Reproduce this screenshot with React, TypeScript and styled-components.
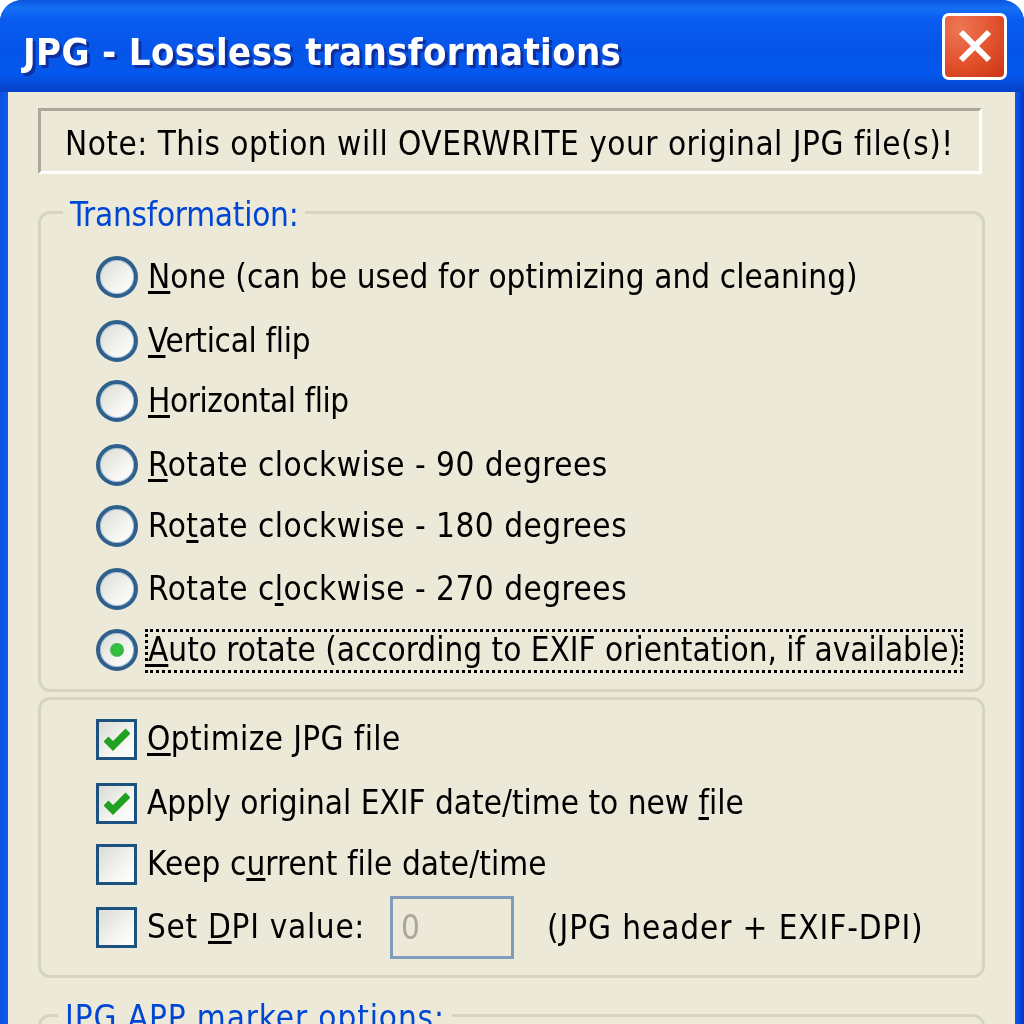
import styled, { createGlobalStyle } from 'styled-components'

const GlobalStyle = createGlobalStyle`
    html, body {
        margin: 0;
        padding: 0;
        background: #ffffff;
    }
    body {
        font-family: 'DejaVu Sans Condensed', 'DejaVu Sans', sans-serif;
        font-variant-ligatures: none;
    }
`

const Screen = styled.div`
    width: 1024px;
    height: 1024px;
    overflow: hidden;
    filter: blur(0.5px);
`

const Win = styled.div`
    height: 1024px;
    display: flex;
    flex-direction: column;
    border-radius: 22px 22px 0 0;
    background: linear-gradient(90deg, #0a4fe0 0, #0f5cf0 8px, #0f5cf0 1015px, #0435c8 1024px);
    overflow: hidden;
`

const TitleBar = styled.div`
    height: 92px;
    flex: none;
    box-sizing: border-box;
    display: flex;
    align-items: center;
    justify-content: space-between;
    padding: 12px 17px 0 23px;
    background: linear-gradient(
        180deg,
        #0a55e0 0,
        #1470f5 8px,
        #0a5cf0 20px,
        #0455e8 55%,
        #0558ee 80%,
        #0340c8 100%
    );
`

const Title = styled.div`
    color: #ffffff;
    font-size: 38px;
    font-weight: 700;
    letter-spacing: 0.33px;
    text-shadow: 3px 3px 0 #0f2f9e;
    white-space: nowrap;
`

const CloseButton = styled.div`
    width: 65px;
    height: 67px;
    margin-top: -12px;
    box-sizing: border-box;
    display: flex;
    align-items: center;
    justify-content: center;
    border: 3px solid #ffffff;
    border-radius: 7px;
    background: radial-gradient(circle at 25% 20%, #ee7755 0, #e2502c 55%, #c93510 100%);
`

const Client = styled.div`
    flex: 1;
    margin: 0 9px 0 8px;
    padding: 16px 30px 0;
    background: #ece9d8;
    display: flex;
    flex-direction: column;
`

const Note = styled.div`
    width: 944px;
    height: 66px;
    box-sizing: border-box;
    display: flex;
    align-items: center;
    padding: 4px 0 0 24px;
    border-style: solid;
    border-width: 3px;
    border-color: #aca899 #ffffff #ffffff #aca899;
    font-size: 33px;
    letter-spacing: 0.5px;
    color: #000000;
    white-space: nowrap;
`

const Group = styled.fieldset<{ $height: number; $top: number }>`
    width: 947px;
    height: ${(p) => p.$height}px;
    margin: ${(p) => p.$top}px 0 0;
    padding: 0 0 0 55px;
    box-sizing: border-box;
    border: 3px solid #d6d3c2;
    border-radius: 12px;
    min-width: 0;
`

const GroupTitle = styled.legend<{ $left: number; $spacing: number }>`
    margin-left: ${(p) => p.$left}px;
    padding: 6px 7px 0 7px;
    color: #0046d5;
    font-size: 33px;
    letter-spacing: ${(p) => p.$spacing}px;
    line-height: 38px;
    white-space: nowrap;
`

const RadioList = styled.div`
    margin-top: 22px;
`

const CheckList = styled.div`
    padding-top: 7px;
`

const RadioRow = styled.div<{ $height: number }>`
    height: ${(p) => p.$height}px;
    display: flex;
    align-items: flex-start;
`

const Row = styled.div<{ $height: number }>`
    height: ${(p) => p.$height}px;
    display: flex;
    align-items: center;
`

const RadioMark = styled.span`
    width: 42px;
    height: 42px;
    flex: none;
    box-sizing: border-box;
    display: flex;
    align-items: center;
    justify-content: center;
    border: 4px solid #2f5f8c;
    border-radius: 50%;
    background: linear-gradient(135deg, #dcdcd5 0, #f4f4f0 60%, #ffffff 100%);
    box-shadow: inset 0 0 0 1px #a9c0d6;
`

const RadioDot = styled.span`
    width: 14px;
    height: 14px;
    border-radius: 50%;
    background: radial-gradient(circle at 50% 45%, #2fc93a 0, #37b742 60%, #93d69a 100%);
`

const CheckMark = styled.span`
    width: 41px;
    height: 41px;
    flex: none;
    box-sizing: border-box;
    display: flex;
    align-items: center;
    justify-content: center;
    border: 3px solid #1c5180;
    background: linear-gradient(135deg, #dcdcd5 0, #f4f4f0 60%, #ffffff 100%);
`

const Label = styled.span<{ $spacing?: number }>`
    margin-left: 10px;
    font-size: 33px;
    letter-spacing: ${(p) => p.$spacing ?? 0}px;
    line-height: 42px;
    color: #000000;
    white-space: nowrap;
`

const FocusLabel = styled(Label)`
    margin: 0 0 0 7px;
    height: 44px;
    box-sizing: border-box;
    padding: 0 3px;
    outline: 3px dotted #000000;
    outline-offset: -3px;
`

const Key = styled.span`
    text-decoration: underline;
    text-underline-offset: 3px;
    text-decoration-thickness: 3px;
`

const DpiInput = styled.div`
    width: 124px;
    height: 63px;
    margin-left: 25px;
    box-sizing: border-box;
    display: flex;
    align-items: center;
    padding-left: 8px;
    border: 3px solid #7f9db9;
    color: #aca899;
    font-size: 33px;
`

const Hint = styled.span`
    margin-left: 33px;
    font-size: 33px;
    letter-spacing: 0.9px;
    color: #000000;
    white-space: nowrap;
`

const Check = () => (
    <svg width='26' height='24' viewBox='0 0 26 24'>
        <path d='M2 12 L9 19 L24 4' fill='none' stroke='#21a121' strokeWidth='7' />
    </svg>
)

const CloseIcon = () => (
    <svg width='36' height='36' viewBox='0 0 36 36'>
        <path d='M4 4 L32 32 M32 4 L4 32' stroke='#ffffff' strokeWidth='6' />
    </svg>
)

const radios = [
    { height: 64, spacing: 0.07, label: <><Key>N</Key>one (can be used for optimizing and cleaning)</> },
    { height: 60, spacing: -0.3, label: <><Key>V</Key>ertical flip</> },
    { height: 64, spacing: -0.4, label: <><Key>H</Key>orizontal flip</> },
    { height: 61, spacing: 0.5, label: <><Key>R</Key>otate clockwise - 90 degrees</> },
    { height: 63, spacing: 0.5, label: <>Ro<Key>t</Key>ate clockwise - 180 degrees</> },
    { height: 61, spacing: 0.5, label: <>Rotate c<Key>l</Key>ockwise - 270 degrees</> },
]

const App = () => {
    return (
        <Screen>
            <GlobalStyle />
            <Win>
                <TitleBar>
                    <Title>JPG - Lossless transformations</Title>
                    <CloseButton>
                        <CloseIcon />
                    </CloseButton>
                </TitleBar>
                <Client>
                    <Note>Note: This option will OVERWRITE your original JPG file(s)!</Note>
                    <Group $height={502} $top={16}>
                        <GroupTitle $left={-33} $spacing={-0.25}>Transformation:</GroupTitle>
                        <RadioList>
                            {radios.map((r, i) => (
                                <RadioRow key={i} $height={r.height}>
                                    <RadioMark />
                                    <Label $spacing={r.spacing}>{r.label}</Label>
                                </RadioRow>
                            ))}
                            <RadioRow $height={44}>
                                <RadioMark>
                                    <RadioDot />
                                </RadioMark>
                                <FocusLabel>
                                    <Key>A</Key>uto rotate (according to EXIF orientation, if available)
                                </FocusLabel>
                            </RadioRow>
                        </RadioList>
                    </Group>
                    <Group $height={281} $top={5}>
                        <CheckList>
                            <Row $height={64}>
                                <CheckMark><Check /></CheckMark>
                                <Label $spacing={0.4}><Key>O</Key>ptimize JPG file</Label>
                            </Row>
                            <Row $height={64}>
                                <CheckMark><Check /></CheckMark>
                                <Label>Apply original EXIF date/time to new <Key>f</Key>ile</Label>
                            </Row>
                            <Row $height={58}>
                                <CheckMark />
                                <Label $spacing={0.07}>Keep c<Key>u</Key>rrent file date/time</Label>
                            </Row>
                            <Row $height={68}>
                                <CheckMark />
                                <Label $spacing={0.7}>Set <Key>D</Key>PI value:</Label>
                                <DpiInput>0</DpiInput>
                                <Hint>(JPG header + EXIF-DPI)</Hint>
                            </Row>
                        </CheckList>
                    </Group>
                    <Group $height={120} $top={15}>
                        <GroupTitle $left={-38} $spacing={0.9}>JPG APP marker options:</GroupTitle>
                    </Group>
                </Client>
            </Win>
        </Screen>
    )
}

export default App
